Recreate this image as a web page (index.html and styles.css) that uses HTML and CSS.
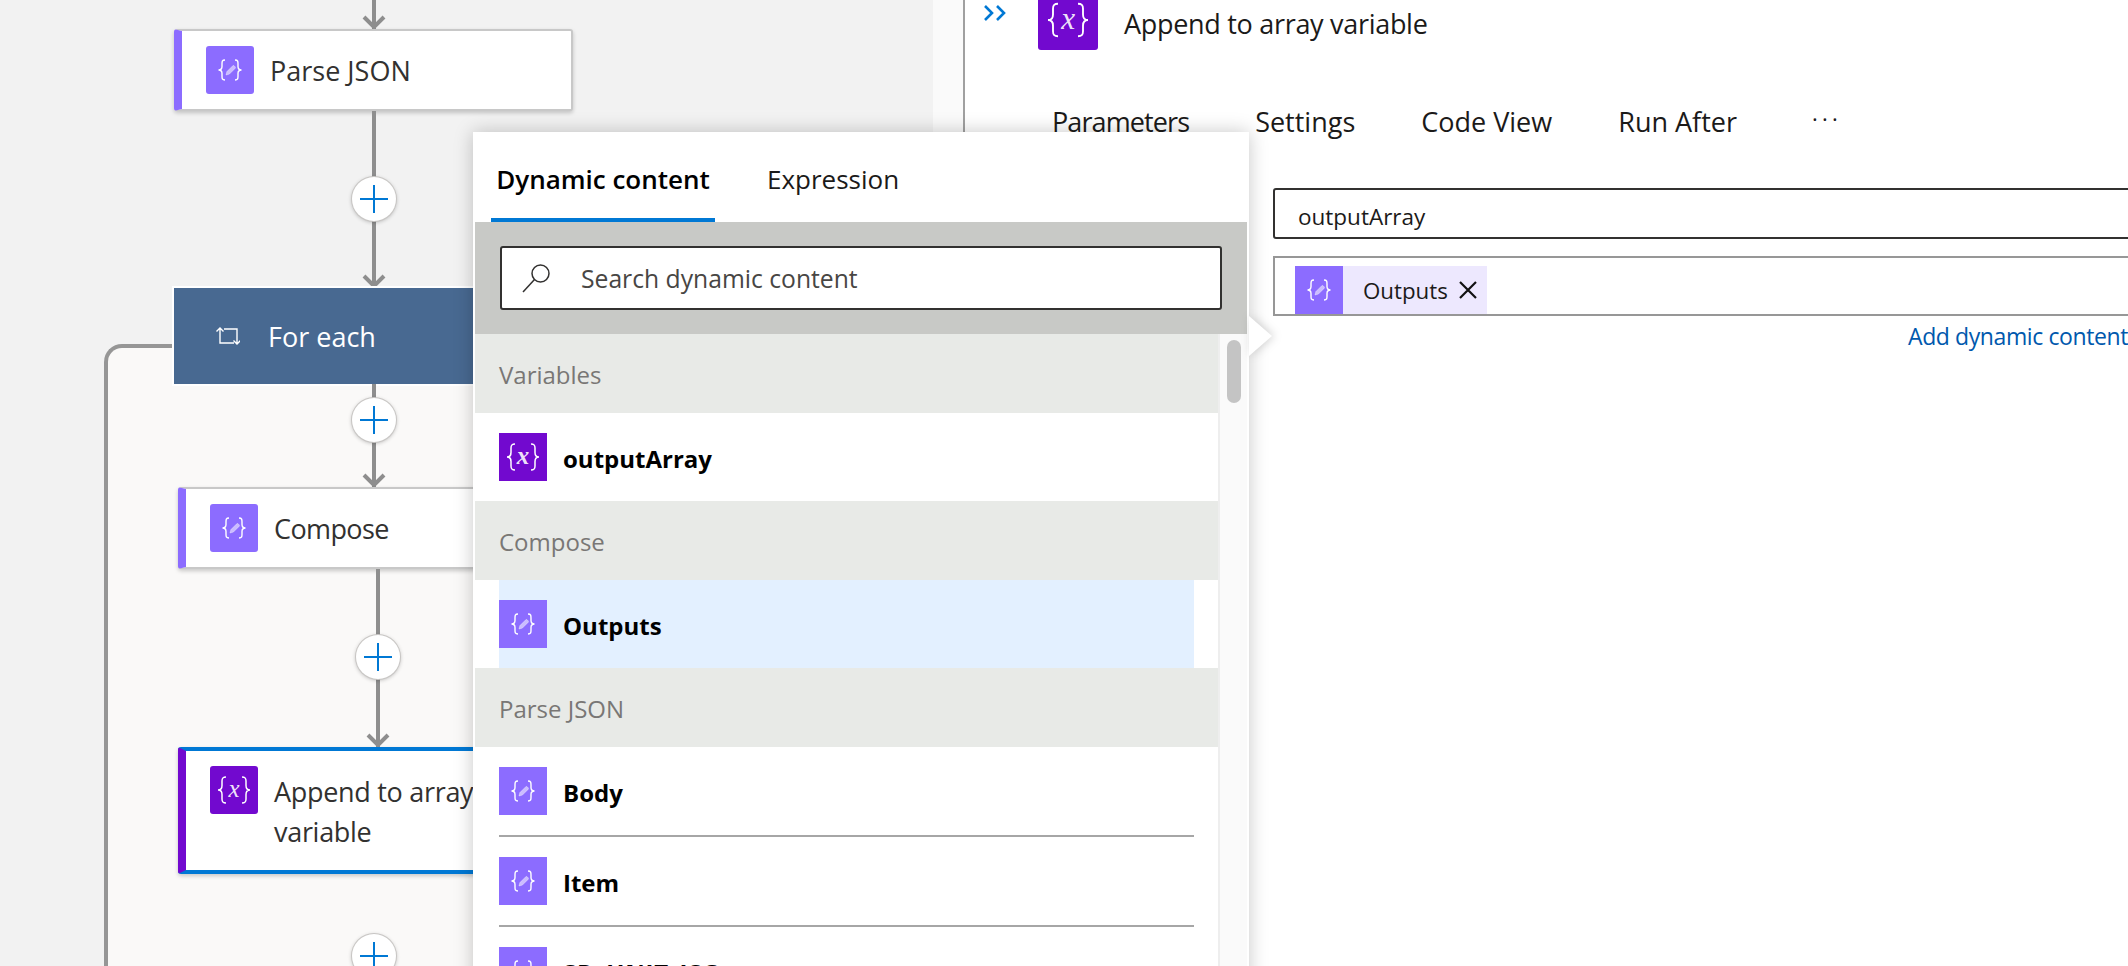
FILE: index.html
```html
<!DOCTYPE html>
<html>
<head>
<link rel="stylesheet" href="styles.css">
</head>
<body>

<svg class="defs" width="0" height="0">
    <symbol id="compose-icon" viewBox="0 0 48 48">
        <path d="M19 14c-3 0-3 1.500-3 4v2.500c0 2-1 3.500-3.500 3.500 2.500 0 3.500 1.500 3.500 3.500V30c0 2.500 0 4 3 4M29 14c3 0 3 1.500 3 4v2.500c0 2 1 3.500 3.500 3.500-2.500 0-3.500 1.500-3.500 3.500V30c0 2.500 0 4-3 4" fill="none" stroke="#fff" stroke-width="1.400"/>
        <path d="M20 29l.9-3.400 5.700-5.700c.5-.5 1.200-.5 1.700 0l.8.8c.5.5.5 1.200 0 1.700l-5.700 5.700z" fill="#fff" fill-opacity=".55" stroke="#fff" stroke-opacity=".6" stroke-width=".6"/>
    </symbol>
    <symbol id="variable-icon" viewBox="0 0 48 48">
        <path d="M16 11c-3.500 0-4 1.500-4 4v4.500c0 2.500-1.200 4.500-4 4.500 2.800 0 4 2 4 4.500V33c0 2.500.5 4 4 4M32 11c3.500 0 4 1.500 4 4v4.500c0 2.500 1.200 4.500 4 4.500-2.800 0-4 2-4 4.500V33c0 2.500-.5 4-4 4" fill="none" stroke="#fff" stroke-width="1.500"/>
        <text x="24" y="31" class="icon-x">x</text>
    </symbol>
    <symbol id="arrow-head" viewBox="0 0 24 14">
        <path d="M2 2l10 10L22 2" fill="none" stroke="#8e8e8e" stroke-width="4"/>
    </symbol>
</svg>

<div class="page">

    <div class="designer">
        <div class="connector connector-top">
            <svg class="arrow"><use href="#arrow-head"/></svg>
        </div>
        <div class="card card-compose">
            <svg class="card-icon"><use href="#compose-icon"/></svg>
            <span>Parse JSON</span>
        </div>
        <div class="connector connector-long">
            <button class="plus"></button>
            <svg class="arrow"><use href="#arrow-head"/></svg>
        </div>

        <div class="foreach">
            <div class="loop-box"></div>
            <div class="foreach-head">
                <svg class="loop-icon" viewBox="0 0 24 18">
                    <path d="M4 1v15h14M8 2h13v15M.5 4.500L4 1l3.500 3.500M17.500 13.500L21 17l3.500-3.500" fill="none" stroke="#fff" stroke-width="1.400"/>
                </svg>
                <span>For each</span>
            </div>
            <div class="connector connector-short">
                <button class="plus"></button>
                <svg class="arrow"><use href="#arrow-head"/></svg>
            </div>
            <div class="inner">
                <div class="card card-compose">
                    <svg class="card-icon"><use href="#compose-icon"/></svg>
                    <span class="card-tight">Compose</span>
                </div>
                <div class="connector connector-inner">
                    <button class="plus"></button>
                    <svg class="arrow"><use href="#arrow-head"/></svg>
                </div>
                <div class="card card-variable">
                    <svg class="card-icon"><use href="#variable-icon"/></svg>
                    <span>Append to array variable</span>
                </div>
            </div>
            <button class="plus plus-last"></button>
        </div>
    </div>

    <div class="splitter"></div>

    <div class="details">
        <div class="details-head">
            <svg class="collapse" viewBox="0 0 24 16">
                <path d="M2 1l7 7-7 7M14 1l7 7-7 7" fill="none" stroke="#0078d4" stroke-width="2.600"/>
            </svg>
            <svg class="details-icon"><use href="#variable-icon"/></svg>
            <span>Append to array variable</span>
        </div>
        <div class="details-tabs">
            <span class="tab-first">Parameters</span>
            <span>Settings</span>
            <span>Code View</span>
            <span>Run After</span>
            <span class="more">&middot;&middot;&middot;</span>
        </div>
        <div class="field">outputArray</div>
        <div class="token-field">
            <div class="token">
                <svg class="token-icon"><use href="#compose-icon"/></svg>
                <span>Outputs</span>
                <svg class="token-x" viewBox="0 0 18 18">
                    <path d="M1 1l16 16M17 1L1 17" fill="none" stroke="#111" stroke-width="2.200"/>
                </svg>
            </div>
        </div>
        <div class="add-link">Add dynamic content</div>
    </div>

    <div class="popup">
        <div class="popup-tabs">
            <span class="popup-tab active">Dynamic content</span>
            <span class="popup-tab">Expression</span>
        </div>
        <div class="search-band">
            <div class="search-box">
                <svg class="search-icon" viewBox="0 0 30 30">
                    <circle cx="18.500" cy="10.500" r="8.500" fill="none" stroke="#323130" stroke-width="1.500"/>
                    <path d="M12.500 16.500L1 29" fill="none" stroke="#323130" stroke-width="1.500"/>
                </svg>
                <span>Search dynamic content</span>
            </div>
        </div>
        <div class="list-wrap">
            <div class="list">
                <div class="group-title">Variables</div>
                <div class="item">
                    <svg class="item-icon"><use href="#variable-icon"/></svg>
                    <span>outputArray</span>
                </div>
                <div class="group-title">Compose</div>
                <div class="item selected">
                    <svg class="item-icon"><use href="#compose-icon"/></svg>
                    <span>Outputs</span>
                </div>
                <div class="group-title">Parse JSON</div>
                <div class="item lined">
                    <svg class="item-icon"><use href="#compose-icon"/></svg>
                    <span>Body</span>
                </div>
                <div class="item lined">
                    <svg class="item-icon"><use href="#compose-icon"/></svg>
                    <span>Item</span>
                </div>
                <div class="item">
                    <svg class="item-icon"><use href="#compose-icon"/></svg>
                    <span class="item-wide">SD_UNIT_ISO</span>
                </div>
            </div>
            <div class="scrollbar"><div class="thumb"></div></div>
        </div>
        <div class="popup-arrow"></div>
    </div>

</div>

</body>
</html>
```

FILE: styles.css
```css
html, body {
    margin: 0;
    height: 100%;
    overflow: hidden;
}

body {
    font-family: "Open Sans", "Noto Sans", sans-serif;
    color: #323130;
}

.defs {
    position: absolute;
}

.icon-x {
    font-family: "Liberation Serif", serif;
    font-style: italic;
    font-size: 25px;
    fill: #fff;
    fill-opacity: 0.9;
    text-anchor: middle;
}

.page {
    position: relative;
    display: flex;
    height: 966px;
    overflow: hidden;
}

/* left side, the flow */
.designer {
    width: 933px;
    flex: none;
    background-color: #f2f2f2;
}

.connector {
    width: 46px;
    margin-left: 351px;
    display: flex;
    flex-direction: column;
    align-items: center;
    box-sizing: border-box;
    background: linear-gradient(#8e8e8e, #8e8e8e) center / 4px 100% no-repeat;
}

.connector-top {
    height: 29px;
}

.connector-long {
    height: 177px;
    padding-top: 66px;
}

.connector-short {
    height: 103px;
    padding-top: 14px;
}

.connector-inner {
    height: 178px;
    padding-top: 66px;
}

.arrow {
    width: 24px;
    height: 14px;
    margin-top: auto;
}

.plus {
    width: 44px;
    height: 44px;
    flex: none;
    padding: 0;
    border: none;
    border-radius: 50%;
    background:
        linear-gradient(#0078d4, #0078d4) center / 28px 2px no-repeat,
        linear-gradient(#0078d4, #0078d4) center / 2px 28px no-repeat,
        #fff;
    box-shadow: 0 0 0 1px #c8c6c4, 0 1px 4px rgba(0, 0, 0, 0.3);
}

.card {
    width: 399px;
    height: 82px;
    box-sizing: border-box;
    margin-left: 174px;
    display: flex;
    align-items: center;
    padding-left: 24px;
    background-color: #fff;
    border: 2px solid #c8c8c8;
    border-left: 8px solid;
    border-radius: 3px;
    box-shadow: 0 2px 4px rgba(0, 0, 0, 0.2);
    font-size: 27px;
}

.card-compose {
    border-left-color: #8c6cff;
}

.card-icon {
    width: 48px;
    height: 48px;
    flex: none;
    margin-right: 16px;
    border-radius: 3px;
    background-color: #8c6cff;
}

.card-tight {
    letter-spacing: -0.6px;
}

.card-variable {
    height: 127px;
    align-items: flex-start;
    padding-top: 15px;
    border-color: #0078d4;
    border-width: 4px;
    border-left: 8px solid #7209cf;
    line-height: 40px;
}

.card-variable .card-icon {
    background-color: #7209cf;
}

.card-variable span {
    margin-top: 6px;
}

.foreach {
    position: relative;
}

.loop-box {
    position: absolute;
    left: 104px;
    top: 56px;
    right: 0;
    height: 700px;
    box-sizing: border-box;
    background-color: #faf9f8;
    border: 4px solid #969696;
    border-right: none;
    border-radius: 18px 0 0 0;
}

.foreach-head {
    position: relative;
    width: 420px;
    height: 96px;
    box-sizing: border-box;
    margin-left: 174px;
    display: flex;
    align-items: center;
    padding-left: 42px;
    background-color: #486991;
    box-shadow: 0 0 0 2px #fff;
    color: #fff;
    font-size: 27px;
}

.loop-icon {
    width: 24px;
    height: 18px;
    margin-right: 28px;
}

.foreach .connector {
    position: relative;
}

.inner {
    position: relative;
    margin-left: 4px;
    letter-spacing: -0.3px;
}

.plus-last {
    position: relative;
    display: block;
    margin: 60px 0 0 352px;
}

/* middle strip */
.splitter {
    width: 30px;
    flex: none;
    background-color: #fafafa;
    border-right: 2px solid #a0a0a0;
}

/* right side, the action details */
.details {
    flex: 1;
    min-width: 0;
    background-color: #fff;
    color: #1b1a19;
    overflow: hidden;
}

.details-head {
    display: flex;
    align-items: center;
    height: 60px;
    margin-top: -10px;
    margin-left: 18px;
    font-size: 27px;
    letter-spacing: -0.3px;
}

.collapse {
    width: 24px;
    height: 16px;
    margin: -14px 31px 0 0;
}

.details-icon {
    width: 60px;
    height: 60px;
    margin-right: 26px;
    border-radius: 3px;
    background-color: #7209cf;
}

.details-head span {
    margin-top: 7px;
}

.details-tabs {
    display: flex;
    align-items: center;
    gap: 66px;
    height: 38px;
    margin: 52px 0 0 87px;
    font-size: 27px;
}

.tab-first {
    letter-spacing: -0.9px;
}

.more {
    margin: -6px 0 0 9px;
    font-size: 22px;
    letter-spacing: 4.2px;
}

.field {
    height: 51px;
    width: 900px;
    box-sizing: border-box;
    margin: 48px 0 0 308px;
    padding: 3px 0 0 23px;
    line-height: 47px;
    border: 2px solid #323130;
    border-radius: 3px;
    font-size: 22.5px;
}

.token-field {
    height: 60px;
    width: 900px;
    box-sizing: border-box;
    margin: 17px 0 0 308px;
    padding: 8px 0 0 20px;
    border: 2px solid #979797;
}

.token {
    display: inline-flex;
    align-items: center;
    height: 48px;
    background-color: #ede8fe;
    font-size: 22.3px;
    padding-right: 10px;
}

.token-icon {
    width: 48px;
    height: 48px;
    margin-right: 20px;
    background-color: #8c6cff;
}

.token-x {
    width: 18px;
    height: 18px;
    margin-left: 11px;
}

.add-link {
    margin: 4px 0 0 943px;
    white-space: nowrap;
    color: #0058ad;
    font-size: 23px;
    letter-spacing: -0.4px;
}

/* dynamic content popup */
.popup {
    position: absolute;
    left: 473px;
    top: 132px;
    width: 776px;
    height: 900px;
    box-sizing: border-box;
    padding: 0 2px;
    background-color: #fff;
    box-shadow: 0 0 18px rgba(0, 0, 0, 0.22);
}

.popup-tabs {
    display: flex;
    height: 90px;
    padding-left: 16px;
    gap: 48px;
}

.popup-tab {
    padding: 0 4px;
    line-height: 94px;
    font-size: 26px;
    color: #1b1a19;
}

.popup-tab.active {
    width: 224px;
    box-sizing: border-box;
    padding: 0;
    text-align: center;
    color: #000;
    font-weight: 600;
    border-bottom: 4px solid #0078d4;
}

.search-band {
    height: 112px;
    box-sizing: border-box;
    padding: 24px 25px 0;
    background-color: #c8c9c6;
}

.search-box {
    height: 64px;
    box-sizing: border-box;
    display: flex;
    align-items: center;
    padding-left: 20px;
    background-color: #fff;
    border: 2px solid #323130;
    border-radius: 3px;
    color: #484644;
    font-size: 24.7px;
}

.search-icon {
    width: 30px;
    height: 30px;
    margin-right: 29px;
}

.list-wrap {
    display: flex;
}

.list {
    width: 743px;
    flex: none;
}

.group-title {
    height: 79px;
    box-sizing: border-box;
    padding-left: 24px;
    line-height: 81px;
    background-color: #e8eae7;
    color: #797775;
    font-size: 24px;
}

.item {
    height: 88px;
    box-sizing: border-box;
    margin: 0 24px;
    display: flex;
    align-items: center;
    color: #000;
    font-size: 24px;
    font-weight: 700;
}

.item span {
    margin-top: 2px;
}

.item-wide {
    letter-spacing: 0.8px;
}

.item.selected {
    background-color: #e3f0ff;
}

.item.lined {
    height: 90px;
    border-bottom: 2px solid #a6a6a6;
}

.item-icon {
    width: 48px;
    height: 48px;
    flex: none;
    margin-right: 16px;
    background-color: #8c6cff;
}

.item:nth-child(2) .item-icon {
    background-color: #7209cf;
}

.scrollbar {
    flex: 1;
    padding: 6px 6px 0 7px;
    background-color: #fafafa;
    border-left: 2px solid #eee;
}

.thumb {
    height: 63px;
    border-radius: 8px;
    background-color: #c4c4c4;
}

.popup-arrow {
    position: absolute;
    left: 100%;
    top: 184px;
    width: 23px;
    height: 40px;
    filter: drop-shadow(2px 0 5px rgba(0, 0, 0, 0.18));
}

.popup-arrow::before {
    content: "";
    display: block;
    height: 100%;
    background-color: #fff;
    clip-path: polygon(0 0, 100% 50%, 0 100%);
}
```
